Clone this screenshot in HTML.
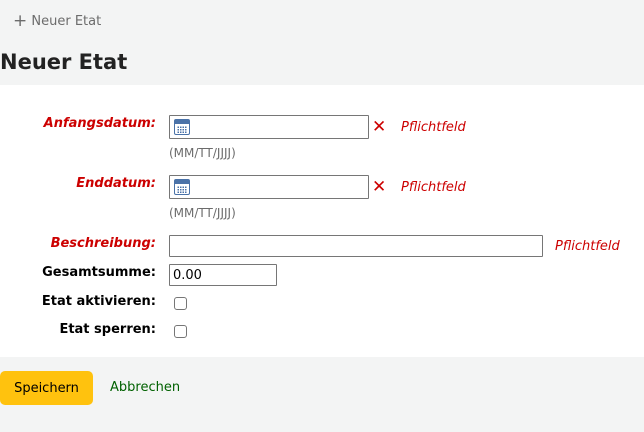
<!DOCTYPE html>
<html><head><meta charset="utf-8"><style>
*{box-sizing:border-box;margin:0;padding:0}
body{width:644px;height:432px;position:relative;background:#fff;font-family:"DejaVu Sans","Liberation Sans",sans-serif;font-size:13px;overflow:hidden}
.a{position:absolute;white-space:nowrap}
.lbl{position:absolute;right:488px;font-weight:bold;color:#000;text-align:right}
.req{color:#cc0000;font-style:italic}
.in{position:absolute;border:1px solid #767676;border-radius:1px;background:#fff;height:24px}
.x{position:absolute;color:#cc0000;font-weight:bold;font-size:17px}
.pf{position:absolute;color:#cc0000;font-style:italic}
.hint{position:absolute;color:#6c6c6c;font-size:12px}
.cb{position:absolute;width:13px;height:13px;border:1px solid #767676;border-radius:3px;background:#fff}
.cal{position:absolute;left:4px;top:3px;width:16px;height:16px;border:1px solid #4a72a8;border-radius:2px;background:#fff}
.cal:before{content:"";position:absolute;left:0;top:0;right:0;height:4px;background:#4a72a8}
.cal:after{content:"";position:absolute;left:2px;top:6px;width:10px;height:7px;background:radial-gradient(circle,#4a72a8 0.8px,transparent 1px) 0 0/2.5px 2.5px}
</style></head><body>
<div class="a" style="left:0;top:0;width:644px;height:85px;background:#f3f4f4"></div>
<div class="a" style="left:0;top:357px;width:644px;height:75px;background:#f3f4f4"></div>
<div class="a" style="left:13px;top:10px;color:#6c6c6c;font-size:13px"><span style="font-size:17px;position:relative;top:1px">+</span> Neuer Etat</div>
<div class="a" style="left:0;top:50px;font-size:21px;font-weight:bold;color:#222">Neuer Etat</div>

<div class="lbl req" style="top:116px">Anfangsdatum:</div>
<div class="in" style="left:169px;top:115px;width:200px"><div class="cal"></div></div>
<div class="x" style="left:372px;top:117px">✕</div>
<div class="pf" style="left:401px;top:120px">Pflichtfeld</div>
<div class="hint" style="left:169px;top:146px">(MM/TT/JJJJ)</div>

<div class="lbl req" style="top:176px">Enddatum:</div>
<div class="in" style="left:169px;top:175px;width:200px"><div class="cal"></div></div>
<div class="x" style="left:372px;top:177px">✕</div>
<div class="pf" style="left:401px;top:180px">Pflichtfeld</div>
<div class="hint" style="left:169px;top:206px">(MM/TT/JJJJ)</div>

<div class="lbl req" style="top:236px">Beschreibung:</div>
<div class="in" style="left:169px;top:235px;width:374px;height:22px"></div>
<div class="pf" style="left:555px;top:239px">Pflichtfeld</div>

<div class="lbl" style="top:265px">Gesamtsumme:</div>
<div class="in" style="left:169px;top:264px;width:108px;height:22px;padding:3px 3px;color:#000">0.00</div>

<div class="lbl" style="top:294px">Etat aktivieren:</div>
<div class="cb" style="left:174px;top:297px"></div>
<div class="lbl" style="top:322px">Etat sperren:</div>
<div class="cb" style="left:174px;top:325px"></div>

<div class="a" style="left:0;top:371px;width:93px;height:34px;background:#ffc20e;border-radius:5px;text-align:center;line-height:35px;color:#000">Speichern</div>
<div class="a" style="left:110px;top:380px;color:#006100">Abbrechen</div>
</body></html>
